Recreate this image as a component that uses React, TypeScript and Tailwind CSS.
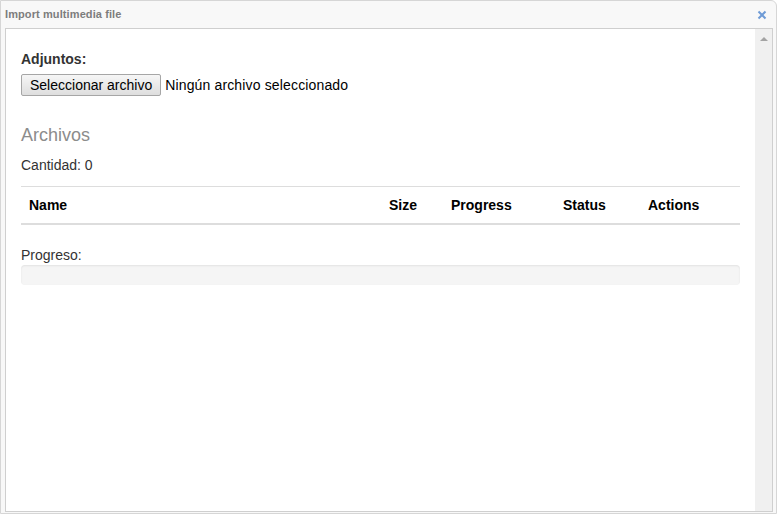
export default function App() {
  const columns = [
    { label: "Name", width: "w-[360px]" },
    { label: "Size", width: "w-[62px]" },
    { label: "Progress", width: "w-[112px]" },
    { label: "Status", width: "w-[85px]" },
    { label: "Actions", width: "w-[100px]" },
  ];

  return (
    <div className="w-[779px] h-[514px] bg-white font-['Liberation_Sans',Arial,sans-serif]">
      {/* dialog frame */}
      <div className="w-[777px] h-[514px] border border-[#d6d6d6] rounded-tr-[6px] bg-[#f8f8f8] flex flex-col">
        {/* title bar */}
        <div className="h-[27px] flex items-center justify-between pl-[4px] pr-[9px] shrink-0">
          <span className="text-[11px] font-bold text-[#7d7d7d] tracking-[0.1px]">Import multimedia file</span>
          <svg width="10" height="10" viewBox="0 0 10 10">
            <path d="M1.5 1.5 L8.5 8.5 M8.5 1.5 L1.5 8.5" stroke="#6f9bd6" strokeWidth="2" />
          </svg>
        </div>

        {/* embedded frame */}
        <div className="flex-1 ml-[4px] mr-[3px] mb-[1px] border border-[#cfcfcf] bg-white flex min-h-0">
          <div className="flex-1 pl-[15px] pr-[15px] pt-[20px] text-[14px] leading-[20px] text-[#333]">
            <label className="block font-bold">Adjuntos:</label>
            <div className="mt-[5px] flex items-center h-[22px]">
              <button className="h-[22px] px-[8px] text-[14px] text-black border border-[#a6a6a6] rounded-[2px] bg-gradient-to-b from-[#f6f6f6] to-[#dedede]">
                Seleccionar archivo
              </button>
              <span className="ml-[4px] text-black tracking-[0.15px]">Ningún archivo seleccionado</span>
            </div>

            <h3 className="mt-[29px] text-[18px] leading-[20px] text-[#8c8c8c]">Archivos</h3>
            <p className="mt-[10px]">Cantidad: 0</p>

            <div className="mt-[11px] border-t border-[#dddddd] border-b-2 border-b-[#dddddd] flex">
              {columns.map((c) => (
                <div key={c.label} className={`${c.width} px-[8px] py-[8px] font-bold text-black`}>
                  {c.label}
                </div>
              ))}
            </div>

            <p className="mt-[20px]">Progreso:</p>
            <div className="h-[20px] rounded-[4px] bg-[#f5f5f5] shadow-[inset_0_1px_2px_rgba(0,0,0,0.08)]" />
          </div>

          {/* scrollbar */}
          <div className="w-[17px] bg-[#f0f0f0] flex justify-center pt-[7px] shrink-0">
            <svg width="8" height="5" viewBox="0 0 8 5">
              <path d="M0 5 L4 1 L8 5 Z" fill="#a3a3a3" />
            </svg>
          </div>
        </div>
      </div>
    </div>
  );
}
